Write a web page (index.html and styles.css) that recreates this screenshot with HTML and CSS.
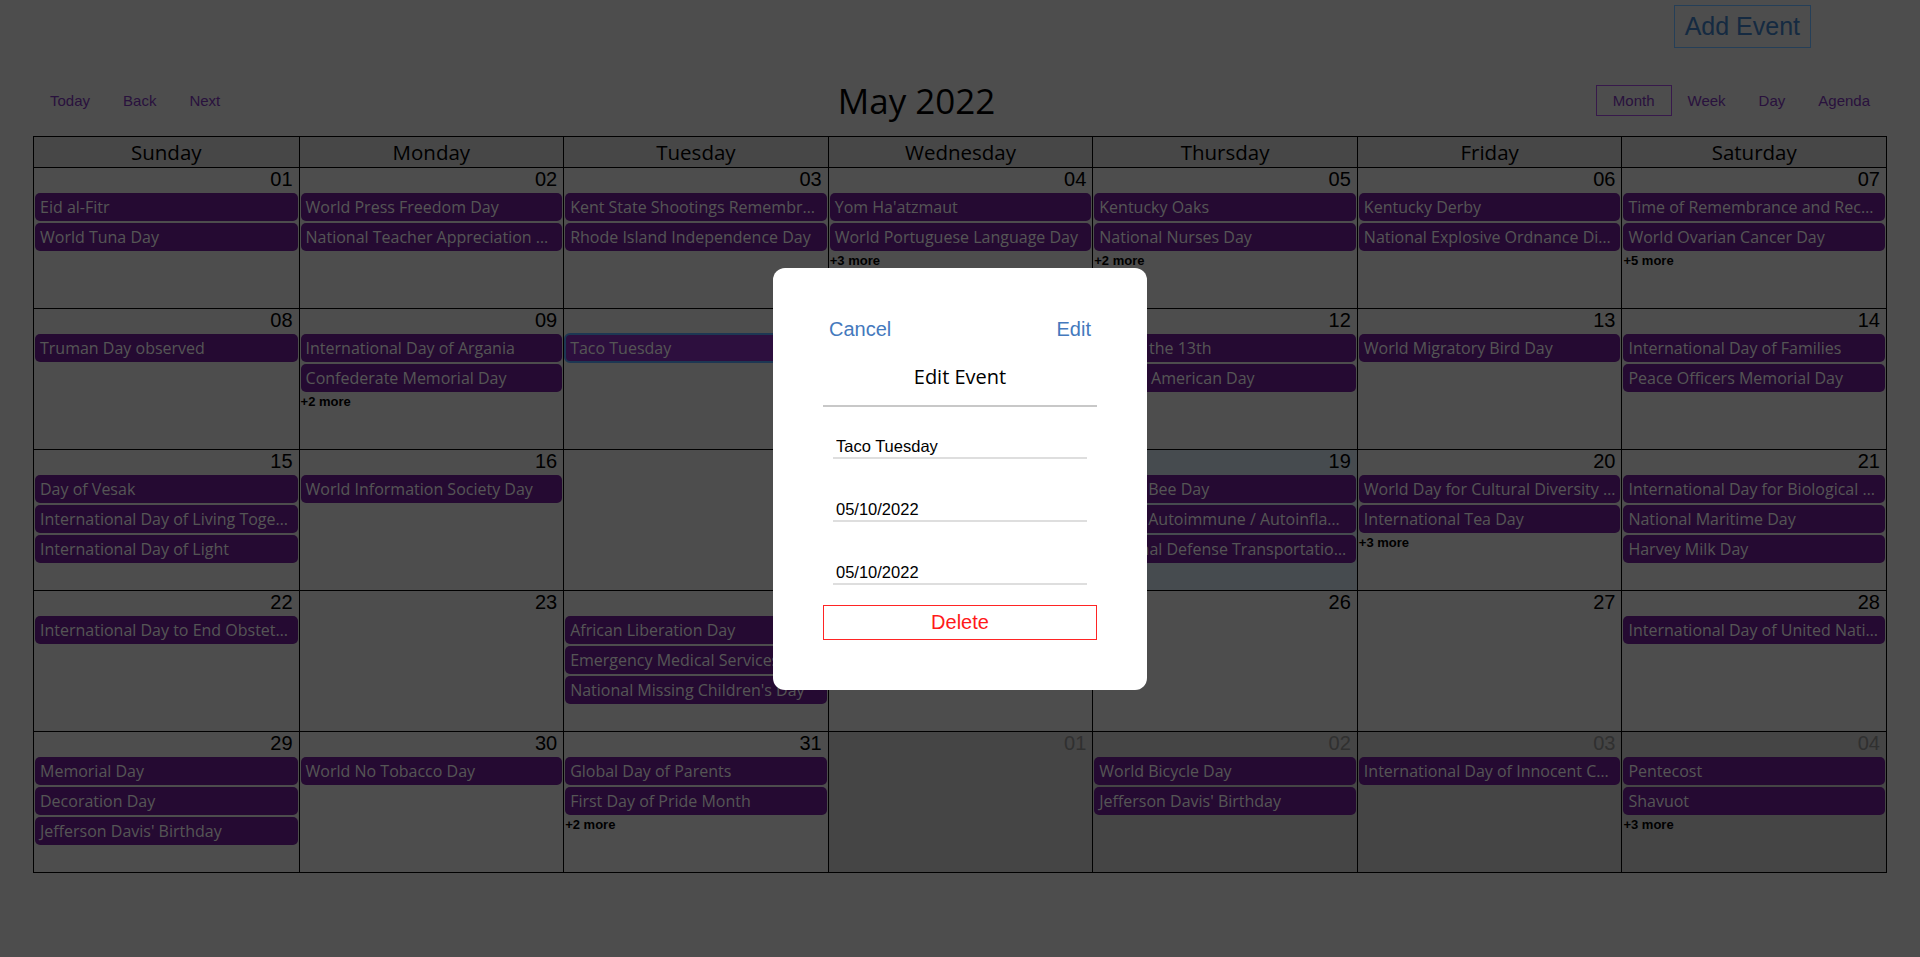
FILE: index.html
```html
<!DOCTYPE html>
<html lang="en">
<head>
<meta charset="utf-8">
<title>Calendar</title>
<link rel="stylesheet" href="styles.css">
</head>
<body>
<div class="app">
  <header class="top-bar">
    <button class="add-btn" type="button">Add Event</button>
  </header>

  <div class="toolbar">
    <div class="btn-group">
      <button type="button">Today</button><button type="button">Back</button><button type="button">Next</button>
    </div>
    <span class="toolbar-label">May 2022</span>
    <div class="btn-group">
      <button type="button" class="active">Month</button><button type="button">Week</button><button type="button">Day</button><button type="button">Agenda</button>
    </div>
  </div>

  <div class="month">
    <div class="head-row">
      <div class="head">Sunday</div>
      <div class="head">Monday</div>
      <div class="head">Tuesday</div>
      <div class="head">Wednesday</div>
      <div class="head">Thursday</div>
      <div class="head">Friday</div>
      <div class="head">Saturday</div>
    </div>

    <div class="week">
      <div class="day"><div class="date">01</div><div class="ev">Eid al-Fitr</div><div class="ev">World Tuna Day</div></div>
      <div class="day"><div class="date">02</div><div class="ev">World Press Freedom Day</div><div class="ev">National Teacher Appreciation Day</div></div>
      <div class="day"><div class="date">03</div><div class="ev">Kent State Shootings Remembrance</div><div class="ev">Rhode Island Independence Day</div></div>
      <div class="day"><div class="date">04</div><div class="ev">Yom Ha'atzmaut</div><div class="ev">World Portuguese Language Day</div><div class="more">+3 more</div></div>
      <div class="day"><div class="date">05</div><div class="ev">Kentucky Oaks</div><div class="ev">National Nurses Day</div><div class="more">+2 more</div></div>
      <div class="day"><div class="date">06</div><div class="ev">Kentucky Derby</div><div class="ev">National Explosive Ordnance Disposal Day</div></div>
      <div class="day"><div class="date">07</div><div class="ev">Time of Remembrance and Reconciliation</div><div class="ev">World Ovarian Cancer Day</div><div class="more">+5 more</div></div>
    </div>

    <div class="week">
      <div class="day"><div class="date">08</div><div class="ev">Truman Day observed</div></div>
      <div class="day"><div class="date">09</div><div class="ev">International Day of Argania</div><div class="ev">Confederate Memorial Day</div><div class="more">+2 more</div></div>
      <div class="day"><div class="date">10</div><div class="ev selected">Taco Tuesday</div></div>
      <div class="day"><div class="date">11</div></div>
      <div class="day"><div class="date">12</div><div class="ev">Friday the 13th</div><div class="ev">Native American Day</div></div>
      <div class="day"><div class="date">13</div><div class="ev">World Migratory Bird Day</div></div>
      <div class="day"><div class="date">14</div><div class="ev">International Day of Families</div><div class="ev">Peace Officers Memorial Day</div></div>
    </div>

    <div class="week">
      <div class="day"><div class="date">15</div><div class="ev">Day of Vesak</div><div class="ev">International Day of Living Together in Peace</div><div class="ev">International Day of Light</div></div>
      <div class="day"><div class="date">16</div><div class="ev">World Information Society Day</div></div>
      <div class="day"><div class="date">17</div></div>
      <div class="day"><div class="date">18</div></div>
      <div class="day today"><div class="date">19</div><div class="ev">World Bee Day</div><div class="ev">World Autoimmune / Autoinflammatory Arthritis Day</div><div class="ev">National Defense Transportation Day</div></div>
      <div class="day"><div class="date">20</div><div class="ev">World Day for Cultural Diversity for Dialogue</div><div class="ev">International Tea Day</div><div class="more">+3 more</div></div>
      <div class="day"><div class="date">21</div><div class="ev">International Day for Biological Diversity</div><div class="ev">National Maritime Day</div><div class="ev">Harvey Milk Day</div></div>
    </div>

    <div class="week">
      <div class="day"><div class="date">22</div><div class="ev">International Day to End Obstetric Fistula</div></div>
      <div class="day"><div class="date">23</div></div>
      <div class="day"><div class="date">24</div><div class="ev">African Liberation Day</div><div class="ev">Emergency Medical Services for Children Day</div><div class="ev">National Missing Children's Day</div></div>
      <div class="day"><div class="date">25</div></div>
      <div class="day"><div class="date">26</div></div>
      <div class="day"><div class="date">27</div></div>
      <div class="day"><div class="date">28</div><div class="ev">International Day of United Nations Peacekeepers</div></div>
    </div>

    <div class="week">
      <div class="day"><div class="date">29</div><div class="ev">Memorial Day</div><div class="ev">Decoration Day</div><div class="ev">Jefferson Davis' Birthday</div></div>
      <div class="day"><div class="date">30</div><div class="ev">World No Tobacco Day</div></div>
      <div class="day"><div class="date">31</div><div class="ev">Global Day of Parents</div><div class="ev">First Day of Pride Month</div><div class="more">+2 more</div></div>
      <div class="day off"><div class="date">01</div></div>
      <div class="day off"><div class="date">02</div><div class="ev">World Bicycle Day</div><div class="ev">Jefferson Davis' Birthday</div></div>
      <div class="day off"><div class="date">03</div><div class="ev">International Day of Innocent Children Victims of Aggression</div></div>
      <div class="day off"><div class="date">04</div><div class="ev">Pentecost</div><div class="ev">Shavuot</div><div class="more">+3 more</div></div>
    </div>
  </div>
</div>

<div class="overlay">
  <div class="modal">
    <div class="modal-actions">
      <button type="button" class="link-btn">Cancel</button>
      <button type="button" class="link-btn">Edit</button>
    </div>
    <h2 class="modal-title">Edit Event</h2>
    <div class="rule"></div>
    <div class="fields">
      <input class="field" type="text" value="Taco Tuesday">
      <input class="field" type="text" value="05/10/2022">
      <input class="field" type="text" value="05/10/2022">
    </div>
    <button type="button" class="delete-btn">Delete</button>
  </div>
</div>
</body>
</html>
```

FILE: styles.css
```css
* { box-sizing: border-box; }

html, body {
  margin: 0;
  height: 100%;
}

body {
  background: #9a9a9a;
  color: #000;
  font-family: "Liberation Sans", Arial, sans-serif;
  overflow: hidden;
}

.app {
  padding: 5px 33px 0 33px;
}

/* top bar */
.top-bar {
  display: flex;
  justify-content: flex-end;
  padding-right: 76px;
}

.add-btn {
  font-family: "Liberation Sans", Arial, sans-serif;
  font-size: 25px;
  line-height: 29px;
  padding: 6px 10px;
  background: transparent;
  color: #2a5583;
  border: 1px solid #4a7fb0;
}

/* toolbar */
.toolbar {
  display: flex;
  align-items: center;
  height: 51px;
  margin-top: 27px;
  margin-bottom: 10px;
}

.btn-group {
  display: flex;
}

.btn-group button {
  font-family: "Liberation Sans", Arial, sans-serif;
  font-size: 15px;
  line-height: 17px;
  padding: 6px 16px;
  background: transparent;
  border: 1px solid transparent;
  color: #52247a;
}

.btn-group button + button {
  margin-left: -1px;
}

.btn-group button.active {
  border-color: #6e3296;
}

.toolbar-label {
  flex: 1;
  text-align: center;
  font-family: "Open Sans", "Noto Sans", sans-serif;
  font-size: 35px;
  line-height: 51px;
  padding: 0 10px;
}

/* month grid */
.month {
  border: 1px solid #000;
}

.head-row,
.week {
  display: grid;
  grid-template-columns: repeat(7, minmax(0, 1fr));
}

.head {
  height: 30px;
  line-height: 30px;
  text-align: center;
  font-family: "Open Sans", "Noto Sans", sans-serif;
  font-size: 20.5px;
  background: #8e8e8e;
}

.head + .head,
.day + .day {
  border-left: 1px solid #000;
}

.week {
  border-top: 1px solid #000;
  height: 141px;
}

.day {
  min-width: 0;
  overflow: hidden;
}

.day.off {
  background: #8a8a8a;
}

.day.today {
  background: #8c969f;
}

.date {
  height: 25px;
  line-height: 22px;
  padding-right: 6px;
  text-align: right;
  font-size: 20px;
}

.day.off .date {
  color: #606060;
}

.ev {
  height: 28px;
  margin: 0 1px 2px 1px;
  padding: 2px 5px;
  line-height: 24px;
  border-radius: 5px;
  background: #4a1464;
  color: #ababab;
  font-family: "Open Sans", "Noto Sans", sans-serif;
  font-size: 16px;
  white-space: nowrap;
  overflow: hidden;
  text-overflow: ellipsis;
}

.ev.selected {
  background: #5a1e7c;
  outline: 2px solid #3a6ea6;
  outline-offset: -1px;
}

.more {
  font-size: 13px;
  font-weight: bold;
  line-height: 15px;
  padding-left: 1px;
}

/* modal */
.overlay {
  position: fixed;
  inset: 0;
  background: rgba(0, 0, 0, 0.5);
  display: flex;
  align-items: center;
  justify-content: center;
}

.modal {
  width: 374px;
  padding: 50px;
  background: #fff;
  border-radius: 12px;
}

.modal-actions {
  display: flex;
  justify-content: space-between;
}

.link-btn {
  font-family: "Liberation Sans", Arial, sans-serif;
  font-size: 20px;
  line-height: 23px;
  padding: 0 6px;
  border: none;
  background: none;
  color: #4479bd;
}

.modal-title {
  margin: 21px 0 0 0;
  font-family: "Open Sans", "Noto Sans", sans-serif;
  font-weight: 500;
  font-size: 20px;
  line-height: 30px;
  text-align: center;
}

.rule {
  margin-top: 13px;
  border-top: 2px solid #c8c8c8;
}

.fields {
  padding: 0 10px;
}

.field {
  display: block;
  width: 100%;
  height: 23px;
  margin-top: 40px;
  padding: 1px 3px;
  border: none;
  border-bottom: 2px solid #dedede;
  font-family: "Liberation Sans", Arial, sans-serif;
  font-size: 16.5px;
  color: #000;
  background: transparent;
}

.field:first-child {
  margin-top: 29px;
}

.delete-btn {
  display: block;
  width: 100%;
  margin-top: 20px;
  padding: 5px;
  border: 1px solid #ff2424;
  background: #fff;
  color: #ff1a1a;
  font-family: "Liberation Sans", Arial, sans-serif;
  font-size: 20px;
  line-height: 23px;
}
```
